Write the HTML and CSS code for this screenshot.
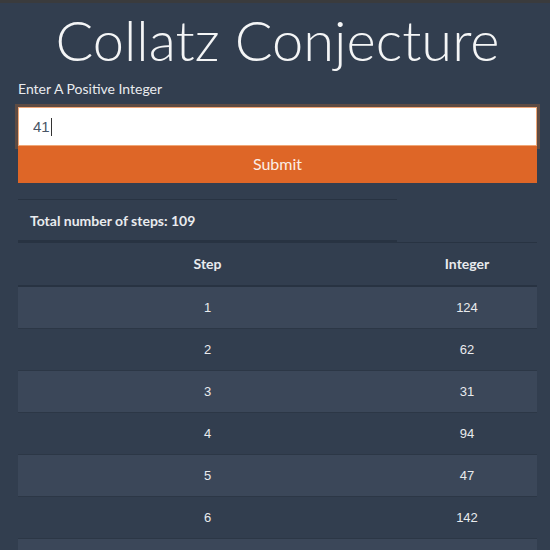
FILE: index.html
```html
<!DOCTYPE html>
<html>
<head>
<meta charset="utf-8">
<link rel="stylesheet" href="styles.css">
</head>
<body>
<div class="topbar"></div>
<main class="container">
  <h1 class="title">Collatz Conjecture</h1>
  <label class="label" for="num">Enter A Positive Integer</label>
  <div class="form">
    <div class="input-wrap"><input id="num" class="input" type="text" value="41"><span class="caret"></span></div>
    <button class="submit">Submit</button>
  </div>
  <table class="summary">
    <tr><td>Total number of steps: 109</td></tr>
  </table>
  <table class="results">
    <colgroup><col class="c1"><col class="c2"></colgroup>
    <thead>
      <tr><th>Step</th><th>Integer</th></tr>
    </thead>
    <tbody>
      <tr><td>1</td><td>124</td></tr>
      <tr><td>2</td><td>62</td></tr>
      <tr><td>3</td><td>31</td></tr>
      <tr><td>4</td><td>94</td></tr>
      <tr><td>5</td><td>47</td></tr>
      <tr><td>6</td><td>142</td></tr>
      <tr><td>7</td><td>71</td></tr>
    </tbody>
  </table>
</main>
</body>
</html>
```

FILE: styles.css
```css
html, body {
  margin: 0;
  padding: 0;
  background: #323e4f;
  overflow: hidden;
}
body {
  font-family: Lato, "Liberation Sans", sans-serif;
  color: #e9ebee;
}
.topbar {
  height: 3px;
  background: #3a3b3d;
}
.container {
  margin: 0 13px 0 18px;
}
.title {
  margin: 0;
  padding-top: 4px;
  height: 74px;
  font-weight: 300;
  font-size: 56px;
  line-height: 66px;
  text-align: center;
  color: #f4f5f6;
}
.label {
  display: block;
  font-size: 14px;
  line-height: 16px;
  color: #e9ebee;
}
.form {
  margin-top: 10px;
}
.input-wrap {
  position: relative;
}
.input {
  display: block;
  box-sizing: border-box;
  width: 100%;
  height: 39px;
  margin: 0;
  padding: 0 14px;
  border: 1px solid #f0a777;
  background: #fff;
  font-family: "Liberation Sans", sans-serif;
  font-size: 15px;
  color: #4a5566;
  outline: none;
  box-shadow: 0 0 0 3px #5e4b43;
}
.caret {
  position: absolute;
  left: 33px;
  top: 11px;
  width: 1px;
  height: 18px;
  background: #333;
}
.submit {
  position: relative;
  display: block;
  width: 100%;
  height: 37px;
  margin: 0;
  padding: 0 0 2px;
  border: 0;
  background: #de6627;
  color: #fbeee6;
  font-family: Lato, sans-serif;
  font-size: 16px;
}
table {
  border-collapse: collapse;
  border-spacing: 0;
}
.summary {
  margin-top: 16px;
  width: 379px;
}
.summary td {
  border-top: 1px solid #283342;
  border-bottom: 2px solid #283342;
  height: 39px;
  padding: 1px 12px 0;
  font-weight: 700;
  font-size: 14px;
}
.results {
  width: 100%;
  table-layout: fixed;
}
.c1 { width: 379px; }
.c2 { width: 140px; }
.results th {
  border-top: 1px solid #283342;
  border-bottom: 2px solid #283342;
  height: 40px;
  padding: 0 0 2px;
  font-weight: 700;
  font-size: 14px;
  text-align: center;
}
.results td {
  border-bottom: 1px solid #2c3746;
  height: 41px;
  padding: 0;
  text-align: center;
  font-family: "Liberation Sans", sans-serif;
  font-size: 13px;
}
.results tbody tr:nth-child(odd) {
  background: #3b4759;
}
```
